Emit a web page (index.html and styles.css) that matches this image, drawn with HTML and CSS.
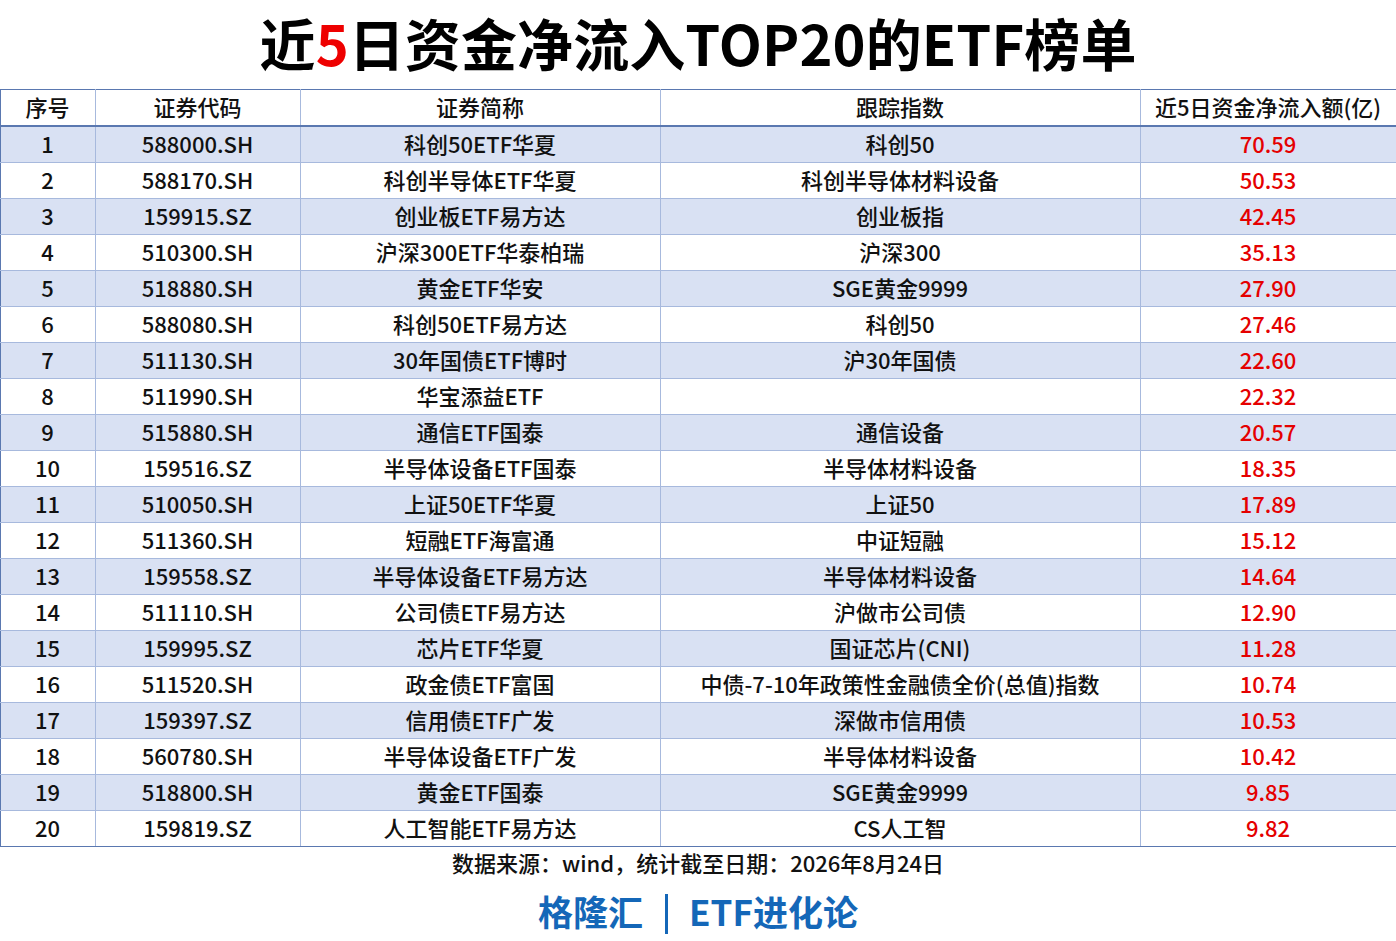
FILE: index.html
```html
<!DOCTYPE html>
<html lang="zh-CN">
<head>
<meta charset="utf-8">
<title>近5日资金净流入TOP20的ETF榜单</title>
<link rel="stylesheet" href="styles.css">
</head>
<body>
<div class="page">
  <h1 class="title">近<span class="red">5</span>日资金净流入TOP20的ETF榜单</h1>
  <table class="grid">
    <colgroup>
      <col class="c1"><col class="c2"><col class="c3"><col class="c4"><col class="c5">
    </colgroup>
    <thead>
      <tr><th>序号</th><th>证券代码</th><th>证券简称</th><th>跟踪指数</th><th>近5日资金净流入额(亿)</th></tr>
    </thead>
    <tbody>
      <tr><td>1</td><td>588000.SH</td><td>科创50ETF华夏</td><td>科创50</td><td class="num">70.59</td></tr>
      <tr><td>2</td><td>588170.SH</td><td>科创半导体ETF华夏</td><td>科创半导体材料设备</td><td class="num">50.53</td></tr>
      <tr><td>3</td><td>159915.SZ</td><td>创业板ETF易方达</td><td>创业板指</td><td class="num">42.45</td></tr>
      <tr><td>4</td><td>510300.SH</td><td>沪深300ETF华泰柏瑞</td><td>沪深300</td><td class="num">35.13</td></tr>
      <tr><td>5</td><td>518880.SH</td><td>黄金ETF华安</td><td>SGE黄金9999</td><td class="num">27.90</td></tr>
      <tr><td>6</td><td>588080.SH</td><td>科创50ETF易方达</td><td>科创50</td><td class="num">27.46</td></tr>
      <tr><td>7</td><td>511130.SH</td><td>30年国债ETF博时</td><td>沪30年国债</td><td class="num">22.60</td></tr>
      <tr><td>8</td><td>511990.SH</td><td>华宝添益ETF</td><td></td><td class="num">22.32</td></tr>
      <tr><td>9</td><td>515880.SH</td><td>通信ETF国泰</td><td>通信设备</td><td class="num">20.57</td></tr>
      <tr><td>10</td><td>159516.SZ</td><td>半导体设备ETF国泰</td><td>半导体材料设备</td><td class="num">18.35</td></tr>
      <tr><td>11</td><td>510050.SH</td><td>上证50ETF华夏</td><td>上证50</td><td class="num">17.89</td></tr>
      <tr><td>12</td><td>511360.SH</td><td>短融ETF海富通</td><td>中证短融</td><td class="num">15.12</td></tr>
      <tr><td>13</td><td>159558.SZ</td><td>半导体设备ETF易方达</td><td>半导体材料设备</td><td class="num">14.64</td></tr>
      <tr><td>14</td><td>511110.SH</td><td>公司债ETF易方达</td><td>沪做市公司债</td><td class="num">12.90</td></tr>
      <tr><td>15</td><td>159995.SZ</td><td>芯片ETF华夏</td><td>国证芯片(CNI)</td><td class="num">11.28</td></tr>
      <tr><td>16</td><td>511520.SH</td><td>政金债ETF富国</td><td>中债-7-10年政策性金融债全价(总值)指数</td><td class="num">10.74</td></tr>
      <tr><td>17</td><td>159397.SZ</td><td>信用债ETF广发</td><td>深做市信用债</td><td class="num">10.53</td></tr>
      <tr><td>18</td><td>560780.SH</td><td>半导体设备ETF广发</td><td>半导体材料设备</td><td class="num">10.42</td></tr>
      <tr><td>19</td><td>518800.SH</td><td>黄金ETF国泰</td><td>SGE黄金9999</td><td class="num">9.85</td></tr>
      <tr><td>20</td><td>159819.SZ</td><td>人工智能ETF易方达</td><td>CS人工智</td><td class="num">9.82</td></tr>
    </tbody>
  </table>
  <p class="source">数据来源：wind，统计截至日期：2026年8月24日</p>
  <p class="brand">格隆汇<span class="sep"></span>ETF进化论</p>
</div>
</body>
</html>
```

FILE: styles.css
```css
html, body {
  margin: 0;
  padding: 0;
  background: #ffffff;
}

body {
  font-family: "Noto Sans CJK SC", "Noto Sans", sans-serif;
  color: #111111;
}

.page {
  width: 1396px;
  display: flex;
  flex-direction: column;
  align-items: center;
}

.title {
  margin: 0;
  height: 89px;
  display: flex;
  align-items: center;
  justify-content: center;
  font-size: 56px;
  font-weight: 700;
  letter-spacing: 0.1px;
  color: #000000;
  line-height: 1;
  padding-bottom: 6px;
  box-sizing: border-box;
}

.red {
  color: #ee0000;
}

.grid {
  width: 1396px;
  border-collapse: collapse;
  table-layout: fixed;
  border: 1px solid #5a78b0;
}

.c1 { width: 95px; }
.c2 { width: 205px; }
.c3 { width: 360px; }
.c4 { width: 480px; }
.c5 { width: 256px; }

.grid th,
.grid td {
  height: 32px;
  padding: 0 0 4px;
  text-align: center;
  vertical-align: middle;
  font-size: 22px;
  font-weight: 500;
  line-height: 1;
  border: 1px solid #a7b9dd;
  white-space: nowrap;
}

.grid thead th {
  height: 31px;
  background: #ffffff;
  border-bottom: 2px solid #5a78b0;
  border-top: 1px solid #5a78b0;
}

.grid tbody td {
  height: 31px;
}

.grid tbody tr:nth-child(odd) td {
  background: #d9e1f3;
}

.grid tbody tr:nth-child(even) td {
  background: #ffffff;
}

.grid th:first-child,
.grid td:first-child {
  border-left: 1px solid #5a78b0;
}

.grid th:last-child,
.grid td:last-child {
  border-right: 1px solid #5a78b0;
}

.grid tbody tr:last-child td {
  border-bottom: 1px solid #5a78b0;
}

.grid td.num {
  color: #e50000;
}

.source {
  margin: 0;
  height: 34px;
  display: flex;
  align-items: center;
  font-size: 22px;
  font-weight: 500;
  color: #111111;
  padding-bottom: 4px;
  box-sizing: border-box;
}

.brand {
  margin: 5px 0 0;
  display: flex;
  align-items: center;
  font-size: 35px;
  font-weight: 700;
  color: #1467b8;
  line-height: 1;
}

.sep {
  display: inline-block;
  width: 3px;
  height: 40px;
  background: #1467b8;
  margin: 8px 21px 0 22px;
}
```
